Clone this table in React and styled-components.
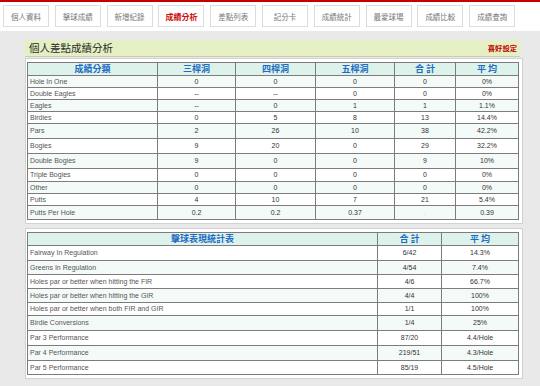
import React from "react";
import styled, { createGlobalStyle } from "styled-components";

const GlobalStyle = createGlobalStyle`
  html, body {
    margin: 0;
    padding: 0;
    background: #ffffff;
    font-family: "Liberation Sans", Arial, sans-serif;
  }
`;

const tabs = [
  "個人資料",
  "擊球成績",
  "新增紀錄",
  "成績分析",
  "差點列表",
  "記分卡",
  "成績統計",
  "最愛球場",
  "成績比較",
  "成績查詢",
];

const scoreRows = [
  { label: "Hole In One", v: ["0", "0", "0", "0", "0%"], h: 12 },
  { label: "Double Eagles", v: ["--", "--", "0", "0", "0%"], h: 12 },
  { label: "Eagles", v: ["--", "0", "1", "1", "1.1%"], h: 12 },
  { label: "Birdies", v: ["0", "5", "8", "13", "14.4%"], h: 12 },
  { label: "Pars", v: ["2", "26", "10", "38", "42.2%"], h: 15 },
  { label: "Bogies", v: ["9", "20", "0", "29", "32.2%"], h: 15 },
  { label: "Double Bogies", v: ["9", "0", "0", "9", "10%"], h: 15 },
  { label: "Triple Bogies", v: ["0", "0", "0", "0", "0%"], h: 13 },
  { label: "Other", v: ["0", "0", "0", "0", "0%"], h: 12 },
  { label: "Putts", v: ["4", "10", "7", "21", "5.4%"], h: 12 },
  { label: "Putts Per Hole", v: ["0.2", "0.2", "0.37", ".", "0.39"], h: 14 },
];

const statRows = [
  { label: "Fairway In Regulation", total: "6/42", avg: "14.3%", h: 15 },
  { label: "Greens In Regulation", total: "4/54", avg: "7.4%", h: 14 },
  { label: "Holes par or better when hitting the FIR", total: "4/6", avg: "66.7%", h: 14 },
  { label: "Holes par or better when hitting the GIR", total: "4/4", avg: "100%", h: 14 },
  { label: "Holes par or better when both FIR and GIR", total: "1/1", avg: "100%", h: 13 },
  { label: "Birdie Conversions", total: "1/4", avg: "25%", h: 15 },
  { label: "Par 3 Performance", total: "87/20", avg: "4.4/Hole", h: 15 },
  { label: "Par 4 Performance", total: "219/51", avg: "4.3/Hole", h: 15 },
  { label: "Par 5 Performance", total: "85/19", avg: "4.5/Hole", h: 14 },
];

export default function App() {
  return (
    <>
      <GlobalStyle />
      <Nav>
        {tabs.map((t) => (
          <Tab key={t} $active={t === "成績分析"}>
            {t}
          </Tab>
        ))}
      </Nav>
      <Main>
        <TitleBar>
          <Title>個人差點成績分析</Title>
          <Prefs>喜好設定</Prefs>
        </TitleBar>

        <Box>
          <Table>
            <colgroup>
              <col style={{ width: 130 }} />
              <col style={{ width: 78 }} />
              <col style={{ width: 80 }} />
              <col style={{ width: 79 }} />
              <col style={{ width: 61 }} />
              <col />
            </colgroup>
            <thead>
              <tr>
                <Th>成績分類</Th>
                <Th>三桿洞</Th>
                <Th>四桿洞</Th>
                <Th>五桿洞</Th>
                <Th>合 計</Th>
                <Th>平 均</Th>
              </tr>
            </thead>
            <tbody>
              {scoreRows.map((r, i) => (
                <Row key={r.label} $alt={i % 2 === 0} style={{ height: r.h }}>
                  <Label>{r.label}</Label>
                  {r.v.map((v, j) => (
                    <Num key={j} $faint={v === "."}>
                      {v}
                    </Num>
                  ))}
                </Row>
              ))}
            </tbody>
          </Table>
        </Box>

        <Box>
          <Table>
            <colgroup>
              <col style={{ width: 350 }} />
              <col style={{ width: 64 }} />
              <col />
            </colgroup>
            <thead>
              <tr>
                <Th>擊球表現統計表</Th>
                <Th>合 計</Th>
                <Th>平 均</Th>
              </tr>
            </thead>
            <tbody>
              {statRows.map((r, i) => (
                <Row key={r.label} $alt={i % 2 === 1} style={{ height: r.h }}>
                  <Label>{r.label}</Label>
                  <Num>{r.total}</Num>
                  <Num>{r.avg}</Num>
                </Row>
              ))}
            </tbody>
          </Table>
        </Box>
      </Main>
    </>
  );
}

const Nav = styled.nav`
  display: flex;
  gap: 5.8px;
  height: 26px;
  padding: 3px 0 0 3px;
  border-top: 2px solid #c40000;
  background: #ffffff;
  box-sizing: content-box;
`;

const Tab = styled.div`
  width: 46px;
  height: 22px;
  box-sizing: border-box;
  border: 1px solid #dcdcdc;
  background: #ffffff;
  display: flex;
  align-items: center;
  justify-content: center;
  font-family: "Noto Sans CJK TC", "Noto Sans CJK SC", sans-serif;
  font-size: ${(p) => (p.$active ? "8px" : "7.5px")};
  font-weight: ${(p) => (p.$active ? 700 : 400)};
  color: ${(p) => (p.$active ? "#cc1111" : "#777777")};
  white-space: nowrap;
`;

const Main = styled.main`
  background: #e9e9e9;
  min-height: 358px;
  padding: 9px 17px 8px 25px;
  box-sizing: border-box;
`;

const TitleBar = styled.div`
  display: flex;
  align-items: center;
  justify-content: space-between;
  height: 17px;
  margin-right: 3px;
  padding: 0 3px 1px 4px;
  box-sizing: border-box;
  background: #e4efc3;
  border-bottom: 1px solid #c9ccb4;
`;

const Title = styled.h1`
  margin: 0;
  font-family: "Noto Sans CJK TC", "Noto Sans CJK SC", sans-serif;
  font-size: 10.5px;
  font-weight: 400;
  line-height: 12px;
  color: #2a2a2a;
`;

const Prefs = styled.span`
  font-family: "Noto Sans CJK TC", "Noto Sans CJK SC", sans-serif;
  font-size: 7.3px;
  font-weight: 700;
  color: #c00000;
`;

const Box = styled.section`
  background: #ffffff;
  border: 1px solid #d2d2d2;
  padding: 3px 3px 3px 1px;
  margin: 1px 0 4px;
`;

const Table = styled.table`
  width: 100%;
  border-collapse: collapse;
  table-layout: fixed;
  border: 1px solid #707070;
`;

const Th = styled.th`
  height: 12px;
  padding: 0;
  background: #ddf2eb;
  border: 1px solid #7c7c7c;
  font-family: "Noto Sans CJK TC", "Noto Sans CJK SC", sans-serif;
  font-size: 9px;
  font-weight: 700;
  line-height: 10px;
  color: #1c6cc4;
  text-align: center;
`;

const Row = styled.tr`
  background: ${(p) => (p.$alt ? "#f4faf8" : "#ffffff")};
`;

const Label = styled.td`
  padding: 0 2px;
  border: 1px solid #7c7c7c;
  font-family: "Liberation Sans", Arial, sans-serif;
  font-size: 7px;
  line-height: 8px;
  color: #555555;
  white-space: nowrap;
  overflow: hidden;
`;

const Num = styled.td`
  padding: 0;
  border: 1px solid #7c7c7c;
  font-family: "Liberation Sans", Arial, sans-serif;
  font-size: 7px;
  line-height: 8px;
  color: ${(p) => (p.$faint ? "#bbbbbb" : "#333333")};
  text-align: center;
`;
